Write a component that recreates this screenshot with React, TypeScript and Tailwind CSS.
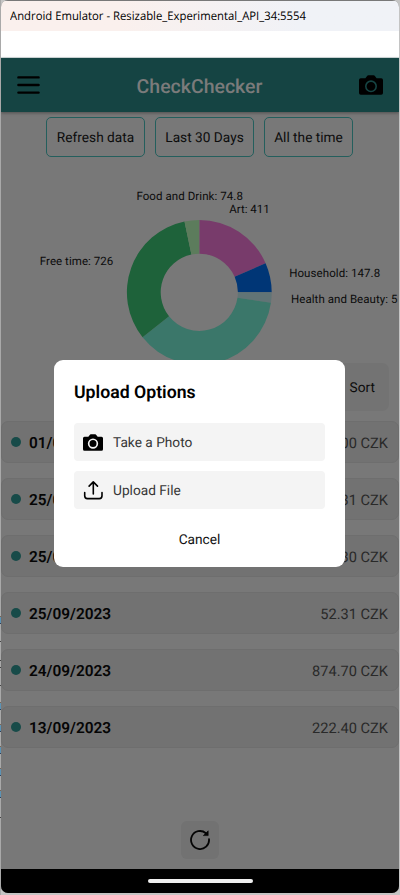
const slices = [
  { color: '#783b6b', from: 0, to: 66.3 },
  { color: '#003676', from: 66.3, to: 90 },
  { color: '#617476', from: 90, to: 98.3 },
  { color: '#3b776a', from: 98.3, to: 231.6 },
  { color: '#1e623a', from: 231.6, to: 348.2 },
  { color: '#5c7c5c', from: 348.2, to: 360 },
];

const labels = [
  { text: 'Food and Drink: 74.8', x: 135.4, y: 22, w: 106.5 },
  { text: 'Art: 411', x: 228.2, y: 35.6, w: 40.5 },
  { text: 'Free time: 726', x: 38.8, y: 87.6, w: 73.5 },
  { text: 'Household: 147.8', x: 288.2, y: 99.5, w: 91 },
  { text: 'Health and Beauty: 5', x: 290, y: 125.6, w: 106.5 },
];

const checks = [
  ['01/09/2023', '100.00 CZK'],
  ['25/09/2023', '52.31 CZK'],
  ['25/09/2023', '41.30 CZK'],
  ['25/09/2023', '52.31 CZK'],
  ['24/09/2023', '874.70 CZK'],
  ['13/09/2023', '222.40 CZK'],
];

const CX = 198.3;
const CY = 115.3;

function arc(from: number, to: number) {
  const p = (r: number, deg: number) => {
    const a = (deg * Math.PI) / 180;
    return `${CX + r * Math.sin(a)} ${CY - r * Math.cos(a)}`;
  };
  const large = to - from > 180 ? 1 : 0;
  return `M${p(72.4, from)}A72.4 72.4 0 ${large} 1 ${p(72.4, to)}L${p(38.6, to)}A38.6 38.6 0 ${large} 0 ${p(38.6, from)}Z`;
}

function Chart() {
  return (
    <svg className="mt-5 block h-[186px] w-[398px] shrink-0" viewBox="0 0 398 186">
      {slices.map((s) => (
        <path key={s.color} d={arc(s.from, s.to)} fill={s.color} />
      ))}
      {labels.map((l) => (
        <text key={l.text} x={l.x} y={l.y + 0.8} textLength={l.w} fontSize="11.5" fill="#0b0b0b">
          {l.text}
        </text>
      ))}
    </svg>
  );
}

function CameraIcon({ className, ring, ringWidth }: { className: string; ring: string; ringWidth: number }) {
  return (
    <svg className={className} viewBox="0 0 24 20">
      <path
        d="M1.8 3.2h4.6l1.7-2.3Q8.5.2 9.4.2h5.2q.9 0 1.3.7l1.7 2.3h4.6Q24 3.2 24 5v13q0 1.8-1.8 1.8H1.8Q0 19.8 0 18V5q0-1.8 1.8-1.8z"
        fill="#000"
      />
      <circle cx="12" cy="11.3" r="5.2" fill="none" stroke={ring} strokeWidth={ringWidth} />
    </svg>
  );
}

function ReloadIcon() {
  return (
    <svg className="size-[22px]" viewBox="0 0 22 22">
      <path d="M20 10.2a9 9 0 1 1-3.1-6" fill="none" stroke="#050505" strokeWidth="1.8" strokeLinecap="round" />
      <path d="M19.2 1.8v4.8h-4.9z" fill="#050505" stroke="#050505" strokeWidth=".6" strokeLinejoin="round" />
    </svg>
  );
}

function WindowEdge() {
  return (
    <svg className="absolute left-0 top-0 h-[895px] w-px" viewBox="0 0 1 895">
      <rect width="1" height="895" fill="#a9a9a9" />
      {[617, 703, 725, 747, 769, 791].map((y) => (
        <g key={y}>
          <rect y={y} width="1" height="6" fill="#5b93b5" />
          <rect y={y - 1} width="1" height="1" fill="#7d6655" />
          <rect y={y + 6} width="1" height="1" fill="#2d405c" />
        </g>
      ))}
      {[641, 660, 667, 685, 817].map((y) => (
        <rect key={y} y={y} width="1" height="1" fill="#444" />
      ))}
    </svg>
  );
}

function FilterButton({ label, width }: { label: string; width: string }) {
  return (
    <div className={`flex h-10 items-center justify-center rounded-[5px] border border-[#245f5d] pt-[3px] text-[13.7px] whitespace-nowrap text-[#0c0c0c] ${width}`}>
      {label}
    </div>
  );
}

function UploadDialog() {
  return (
    <div className="absolute left-[54px] top-[360px] flex h-[207px] w-[291px] flex-col rounded-[9px] bg-white px-5 pt-[21px]">
      <h2 className="h-[42px] text-[17.7px] leading-[25px] font-semibold text-black">Upload Options</h2>
      <div className="flex flex-col gap-2.5">
        <div className="flex h-[38px] items-center rounded-[4px] bg-[#f4f4f4] pl-[9px] text-[13.7px] text-[#363636]">
          <CameraIcon className="mr-[10px] h-[17px] w-5" ring="#f4f4f4" ringWidth={2} />
          <span className="pt-0.5">Take a Photo</span>
        </div>
        <div className="flex h-[38px] items-center rounded-[4px] bg-[#f4f4f4] pl-[9px] text-[13.7px] text-[#363636]">
          <svg className="mr-[9px] size-[21px]" viewBox="0 0 21 21" fill="none" stroke="#000" strokeWidth="1.6" strokeLinecap="round" strokeLinejoin="round">
            <path d="M10.3 14V1.9M6.1 6.1l4.2-4.2 4.2 4.2M1.7 12.6v3.2c0 1.7 1 2.8 2.7 2.8h11.9c1.7 0 2.7-1.1 2.7-2.8v-3.2" />
          </svg>
          <span className="pt-0.5">Upload File</span>
        </div>
      </div>
      <div className="mt-[21px] text-center text-[13.7px] leading-5 text-[#111]">Cancel</div>
    </div>
  );
}

export default function App() {
  return (
    <div className="relative h-[895px] w-[400px] overflow-hidden bg-[#c4c4c4] font-[Roboto,sans-serif] [text-rendering:geometricPrecision]">
      <WindowEdge />
      <div className="ml-px flex h-[893px] w-[398px] flex-col overflow-hidden rounded-t-[7px] rounded-b-[7px] bg-[#787878]">
        <div className="mt-px flex h-[30px] shrink-0 items-center bg-linear-to-r from-[#faf0ed] from-30% to-[#f0f2f7] to-75% pl-[9px] text-black">
          <svg className="block h-[30px] w-[320px] font-['Open_Sans',sans-serif]" viewBox="0 0 320 30">
            <text x="0" y="19" textLength="296" lengthAdjust="spacingAndGlyphs" fontSize="11.8">Android Emulator - Resizable_Experimental_API_34:5554</text>
          </svg>
        </div>
        <div className="h-[27px] shrink-0 border-b border-[#d5dedf] bg-white" />
        <header className="flex h-[54px] shrink-0 items-center justify-between bg-[#154443] pr-4 pl-4 shadow-[0_1px_3px_rgba(0,0,0,0.35)]">
          <svg className="h-5 w-[23px]" viewBox="0 0 23 20" stroke="#000" strokeWidth="2.4" strokeLinecap="round">
            <path d="M1.4 2.4h20.2M1.4 10h20.2M1.4 17.6h20.2" />
          </svg>
          <h1 className="pt-[3px] text-[19.5px] font-medium text-[#7b7b7b]">CheckChecker</h1>
          <CameraIcon className="h-5 w-6" ring="#154443" ringWidth={1.6} />
        </header>
        <div className="mt-[5px] flex shrink-0 gap-[10px] pl-[45px]">
          <FilterButton label="Refresh data" width="w-[99px]" />
          <FilterButton label="Last 30 Days" width="w-[99px]" />
          <FilterButton label="All the time" width="w-[89px]" />
        </div>
        <Chart />
        <div className="flex shrink-0 justify-end pr-[10px]">
          <div className="flex h-12 w-[78px] items-center justify-end rounded-[7px] bg-[#737373] pt-[3px] pr-[14px] text-[13.7px] text-[#0c0c0c]">Sort</div>
        </div>
        <div className="mt-[10px] flex shrink-0 flex-col gap-[15px]">
          {checks.map(([date, total], i) => (
            <div key={i} className="flex h-[42px] items-center rounded-[7px] border border-[#6e6e6e] bg-[#727272] pr-[10px] pl-[9px]">
              <span className="size-[10px] rounded-full bg-[#174b49]" />
              <span className="ml-2 pt-[3px] text-[15.4px] font-semibold text-[#050505]">{date}</span>
              <span className="ml-auto pt-[3px] text-[14.6px] text-[#292929]">{total}</span>
            </div>
          ))}
        </div>
        <div className="mt-[73px] flex shrink-0 justify-center">
          <div className="flex size-[38px] items-center justify-center rounded-[6px] bg-[#727272]">
            <ReloadIcon />
          </div>
        </div>
        <footer className="mt-auto flex h-6 shrink-0 items-center justify-center bg-black">
          <div className="h-1 w-[105px] rounded-full bg-[#efefef]" />
        </footer>
      </div>
      <UploadDialog />
    </div>
  );
}
